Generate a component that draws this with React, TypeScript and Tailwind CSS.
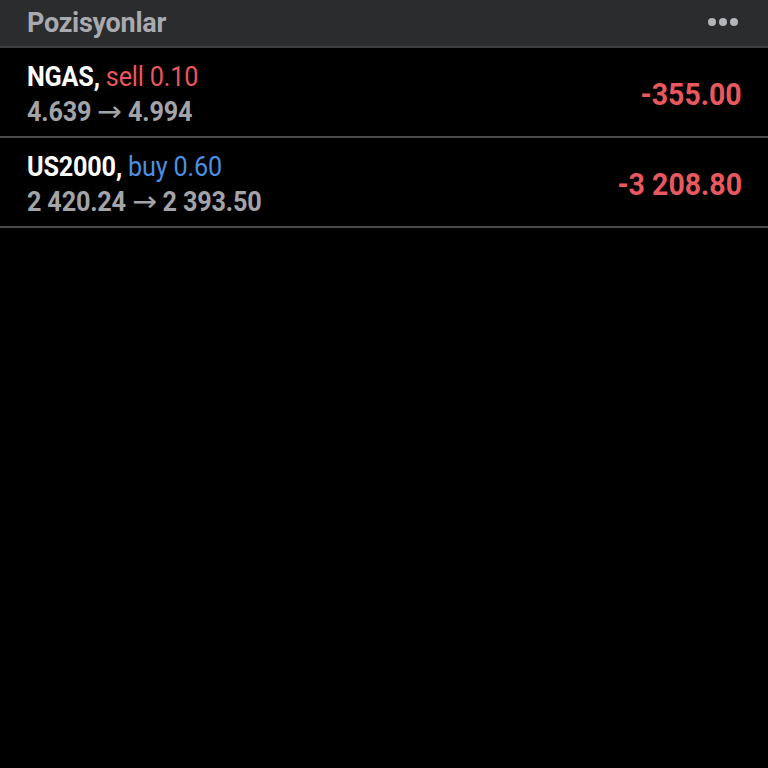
import React from "react";

type Position = {
  symbol: string;
  side: "buy" | "sell";
  volume: string;
  open: string;
  current: string;
  profit: string;
};

const positions: Position[] = [
  { symbol: "NGAS", side: "sell", volume: "0.10", open: "4.639", current: "4.994", profit: "-355.00" },
  { symbol: "US2000", side: "buy", volume: "0.60", open: "2 420.24", current: "2 393.50", profit: "-3 208.80" },
];

function Arrow() {
  return (
    <span
      className="mx-[2px] inline-block scale-x-[1.18] text-[28px] font-normal"
      style={{ fontFamily: "'DejaVu Sans', sans-serif" }}
    >
      →
    </span>
  );
}

function Row({ p }: { p: Position }) {
  return (
    <div className="flex h-[90px] items-center justify-between border-b-2 border-[#4a4a4c] pl-[27px] pr-[26px]">
      <div className="origin-left translate-y-[2px] scale-x-[0.9] whitespace-nowrap text-[28px] font-bold leading-[35px] tracking-[-0.2px]">
        <div>
          <span className="text-white">{p.symbol},</span>{" "}
          <span className={`font-normal ${p.side === "sell" ? "text-[#e8565c]" : "text-[#4d8fe0]"}`}>
            {p.side} {p.volume}
          </span>
        </div>
        <div className="text-[#a3a4a8]">
          {p.open} <Arrow /> {p.current}
        </div>
      </div>
      <div className="origin-right translate-y-[2px] scale-x-[0.89] whitespace-nowrap text-[32px] font-bold text-[#e9585e]">
        {p.profit}
      </div>
    </div>
  );
}

export default function App() {
  return (
    <div className="h-[768px] w-[768px] overflow-hidden bg-black" style={{ fontFamily: "Roboto, 'Noto Sans', sans-serif" }}>
      <div className="flex h-12 items-center justify-between border-b-2 border-[#3e3f42] bg-[#2b2c2e] pl-[27px] pr-[30px]">
        <span className="text-[27px] font-bold tracking-[-0.3px] text-[#a8aaaf]">Pozisyonlar</span>
        <div className="-mt-[2px] flex gap-[3px]">
          <span className="h-2 w-2 rounded-full bg-[#b4b5b8]" />
          <span className="h-2 w-2 rounded-full bg-[#b4b5b8]" />
          <span className="h-2 w-2 rounded-full bg-[#b4b5b8]" />
        </div>
      </div>
      {positions.map((p) => (
        <Row key={p.symbol} p={p} />
      ))}
    </div>
  );
}
